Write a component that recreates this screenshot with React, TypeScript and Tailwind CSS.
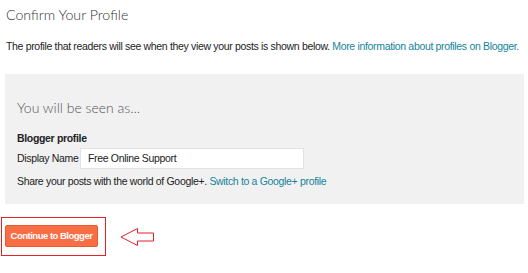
import React from "react";

export default function App() {
  return (
    <div className="w-[528px] h-[273px] bg-white text-[10.5px] tracking-[-0.33px] text-[#222] overflow-hidden" style={{ fontFamily: '"Liberation Sans", Arial, sans-serif' }}>
      <div className="pl-[6px] pt-[4px]">
        <h1 className="text-[14.2px] font-light text-[#333] leading-[22px] whitespace-nowrap tracking-normal" style={{ fontFamily: 'Lato, sans-serif' }}>
          Confirm Your Profile
        </h1>
        <p className="mt-[13px] leading-[14px] whitespace-nowrap">
          The profile that readers will see when they view your posts is shown below.{" "}
          <span className="text-[#15829b]">More information about profiles on Blogger.</span>
        </p>
      </div>
      <div className="ml-[5px] mt-[21px] w-[519px] h-[130px] bg-[#f1f1f1] pl-[12px] pt-[22px]">
        <div className="text-[14px] font-light text-[#555] leading-[24px] whitespace-nowrap tracking-normal" style={{ fontFamily: 'Lato, sans-serif' }}>
          You will be seen as...
        </div>
        <div className="mt-[11px] font-bold leading-[14px]">Blogger profile</div>
        <div className="mt-[3px] flex items-center">
          <span className="w-[63px] whitespace-nowrap">Display Name</span>
          <div className="w-[224px] h-[21px] bg-white border border-[#e3e3e3] flex items-center pl-[7px] whitespace-nowrap">Free Online Support</div>
        </div>
        <div className="mt-[5px] leading-[14px] whitespace-nowrap">
          Share your posts with the world of Google+.{" "}
          <span className="text-[#15829b]">Switch to a Google+ profile</span>
        </div>
      </div>
      <div className="mt-[13px] flex items-center">
        <div className="ml-[1px] w-[105px] h-[39px] border border-[#e8202a] pl-[3px] pt-[7px]">
          <div className="w-[93px] h-[22px] bg-[#f76d44] border border-[#ea5a2c] rounded-[2px] flex items-center justify-center text-white font-bold text-[9.5px] tracking-[-0.5px] whitespace-nowrap">
            Continue to Blogger
          </div>
        </div>
        <svg className="ml-[14px]" width="36" height="20" viewBox="0 0 36 20">
          <path d="M1 10 L17.5 1.5 L17.5 6 L33.5 6 L33.5 14 L17.5 14 L17.5 18.5 Z" fill="none" stroke="#e0202b" strokeWidth="1" />
        </svg>
      </div>
    </div>
  );
}
